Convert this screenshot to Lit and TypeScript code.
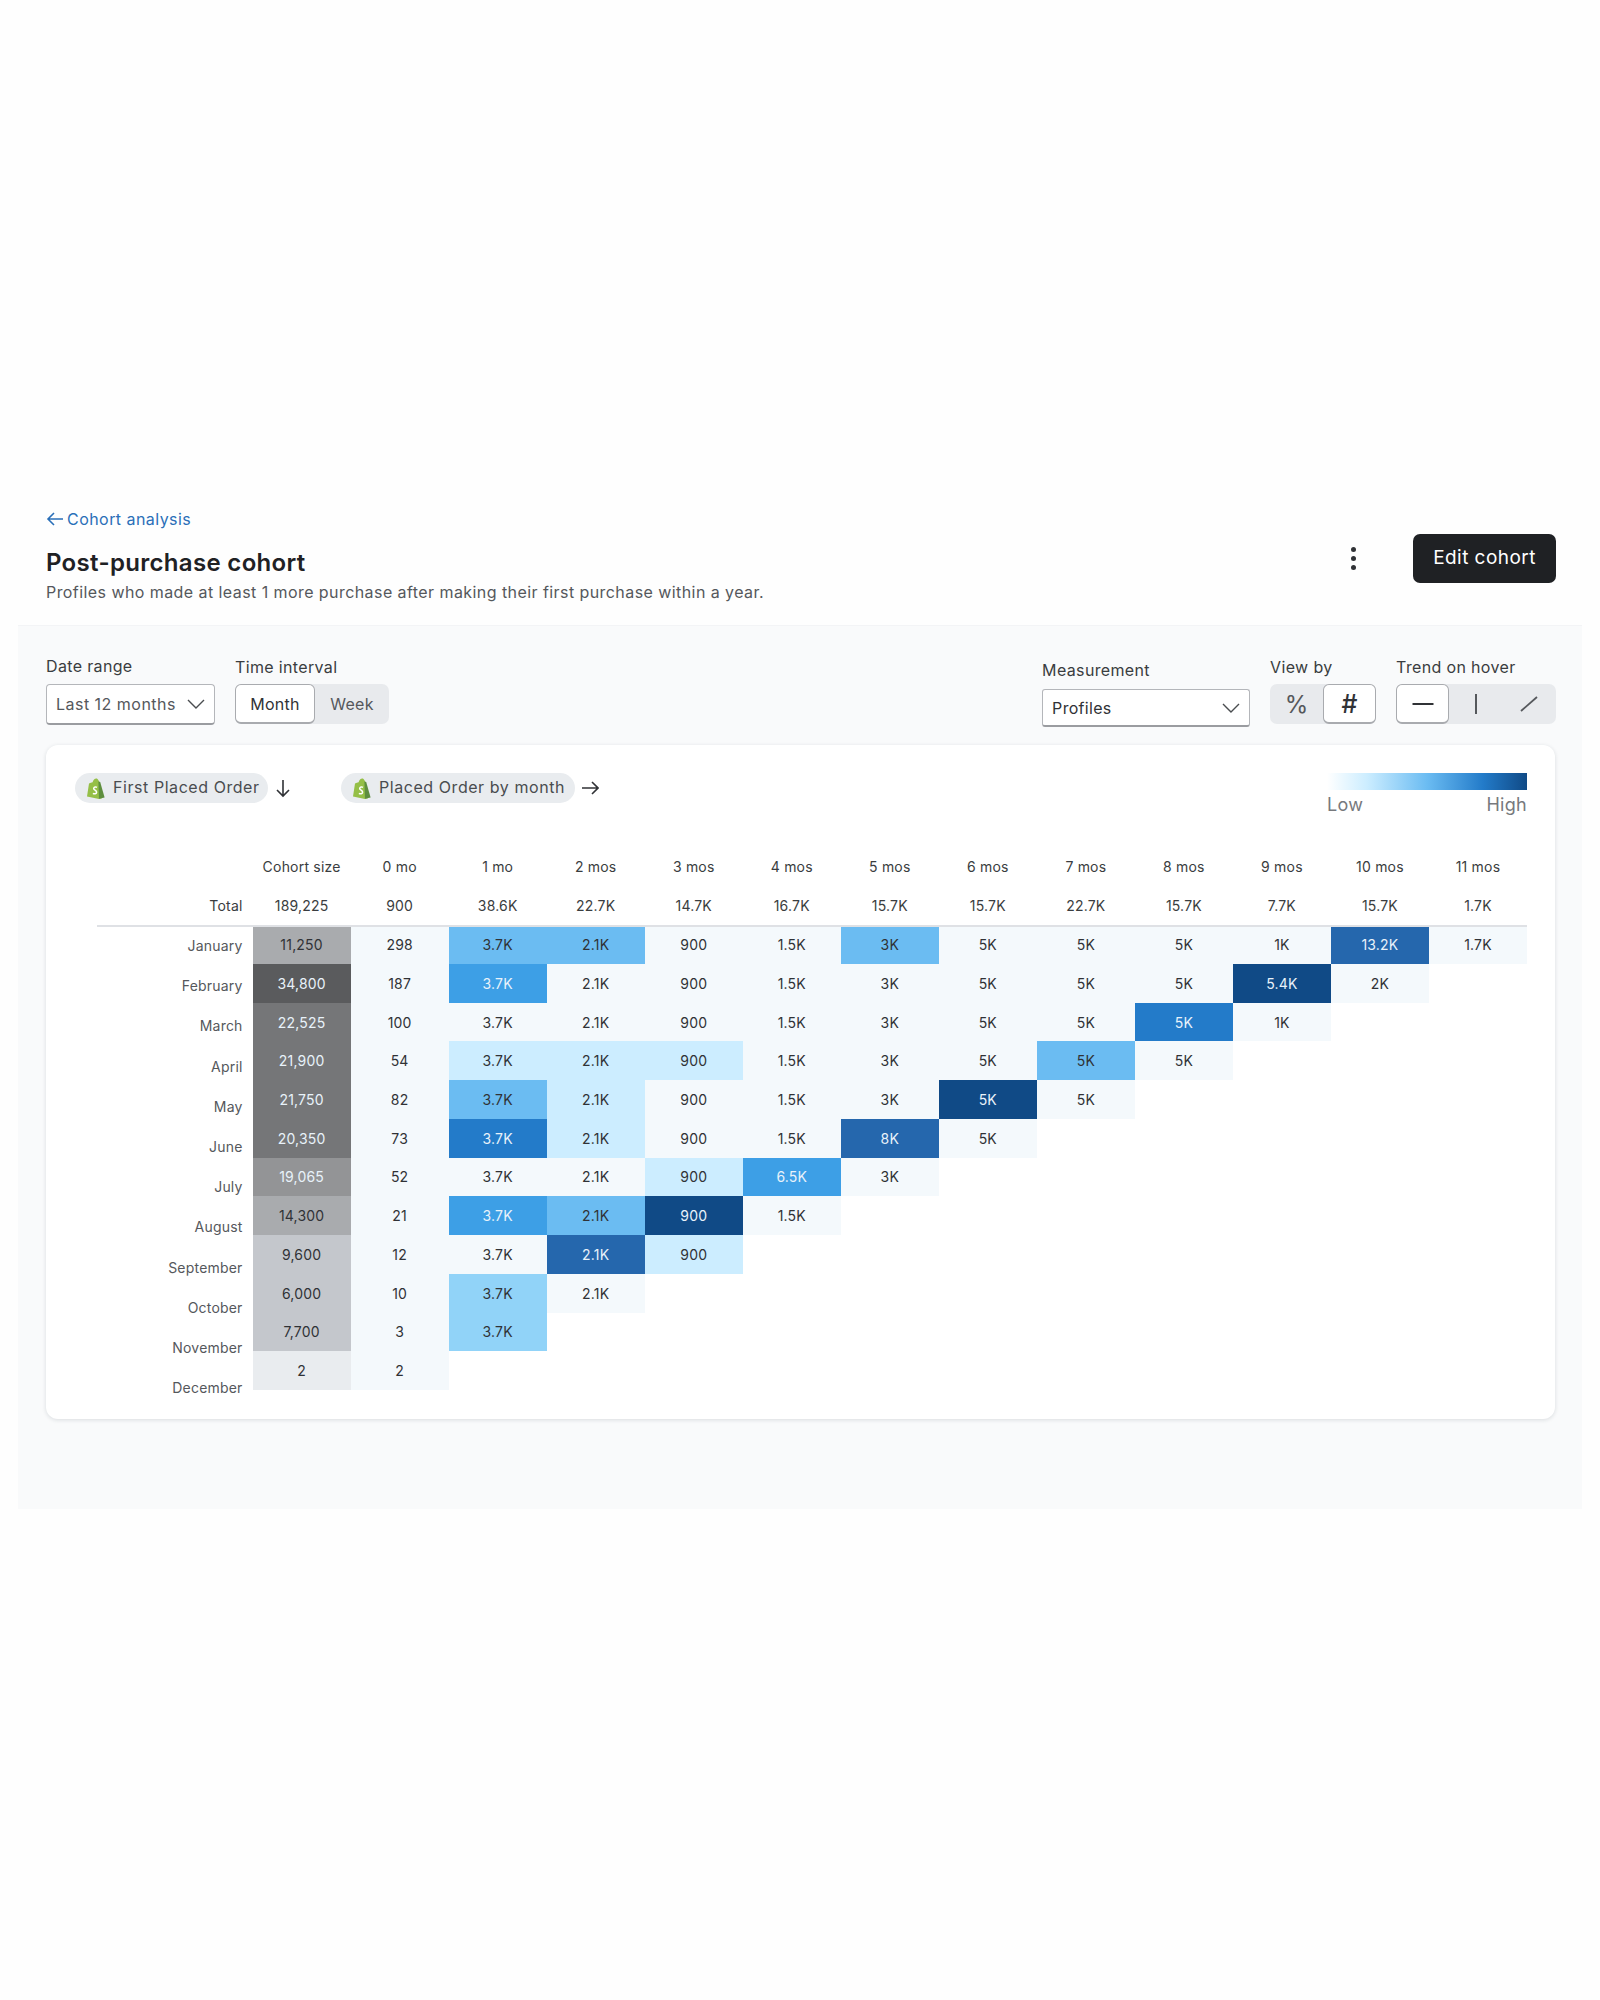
import { LitElement, html, css, svg } from "lit";
import { customElement } from "lit/decorators.js";

const C = { a: "#ccedff", b: "#91d3f8", c: "#6bbcf2", d: "#3d9fe6", e: "#237bc9", f: "#2567ad", g: "#104a86" } as const;
type Cell = [string, keyof typeof C | ""];
const cell = (s: string): Cell => {
  const [v, k] = s.split(":");
  return [v, (k || "") as keyof typeof C | ""];
};
const HEAD = ["Cohort size", "0 mo", "1 mo", "2 mos", "3 mos", "4 mos", "5 mos", "6 mos", "7 mos", "8 mos", "9 mos", "10 mos", "11 mos"];
const TOTAL = ["189,225", "900", "38.6K", "22.7K", "14.7K", "16.7K", "15.7K", "15.7K", "22.7K", "15.7K", "7.7K", "15.7K", "1.7K"];
const MONTHS = ["January", "February", "March", "April", "May", "June", "July", "August", "September", "October", "November", "December"];
const COHORT: [string, string, boolean][] = [
  ["11,250", "#a9abae", false],
  ["34,800", "#5a5b5d", true],
  ["22,525", "#757678", true],
  ["21,900", "#757678", true],
  ["21,750", "#757678", true],
  ["20,350", "#757678", true],
  ["19,065", "#939496", true],
  ["14,300", "#a9abae", false],
  ["9,600", "#c4c7cc", false],
  ["6,000", "#c4c7cc", false],
  ["7,700", "#c4c7cc", false],
  ["2", "#e9ecef", false],
];
const ROWS: string[][] = [
  ["298", "3.7K:c", "2.1K:c", "900", "1.5K", "3K:c", "5K", "5K", "5K", "1K", "13.2K:f", "1.7K"],
  ["187", "3.7K:d", "2.1K", "900", "1.5K", "3K", "5K", "5K", "5K", "5.4K:g", "2K"],
  ["100", "3.7K", "2.1K", "900", "1.5K", "3K", "5K", "5K", "5K:e", "1K"],
  ["54", "3.7K:a", "2.1K:a", "900:a", "1.5K", "3K", "5K", "5K:c", "5K"],
  ["82", "3.7K:c", "2.1K:a", "900", "1.5K", "3K", "5K:g", "5K"],
  ["73", "3.7K:e", "2.1K:a", "900", "1.5K", "8K:f", "5K"],
  ["52", "3.7K", "2.1K", "900:a", "6.5K:d", "3K"],
  ["21", "3.7K:d", "2.1K:c", "900:g", "1.5K"],
  ["12", "3.7K", "2.1K:f", "900:a"],
  ["10", "3.7K:b", "2.1K"],
  ["3", "3.7K:b"],
  ["2"],
];
const LIGHT = new Set(["d", "e", "f", "g"]);

const chevron = html`<svg class="chev" viewBox="0 0 18 10" fill="none" stroke="#4a4d50" stroke-width="1.4"><path d="M1 1 9 9 17 1"/></svg>`;
const shopify = svg`<svg class="bag" viewBox="0 0 19 21"><path d="M1 18.6 3 5.6C4.2 5 5.4 4.6 6.6 4.3 7.2 1.8 8.6.4 10.2.4c1 0 1.7.6 2.1 1.7L13.4 4 15.8 20.4 13 21z" fill="#95bf47"/><path d="M12.4 3.6 14.2 4 18.6 19.4 13 20.8z" fill="#5e8e3e"/><path d="M11 9.4c-.8-.5-3.2-.7-3.3 1.1-.1 1.7 3 1.8 2.9 3.7-.1 1.7-2.2 2-3.7 1.2" fill="none" stroke="#fff" stroke-width="1.5"/></svg>`;

@customElement("app-root")
export class AppRoot extends LitElement {
  static styles = css`
    :host { display: block; width: 1600px; min-height: 2000px; background: #fefefe; font-family: Inter, "Liberation Sans", sans-serif; color: #303236; }
    .page { padding-top: 509px; }
    .header { display: flex; justify-content: space-between; padding: 0 44px 0 46px; height: 116px; }
    .link { display: flex; align-items: center; gap: 3px; height: 20px; color: #2a6fb8; font-size: 16px; letter-spacing: 0.45px; }
    .link svg { width: 18px; height: 16px; }
    h1 { margin: 18px 0 0; font-size: 24px; line-height: 32px; font-weight: 600; color: #1f2124; letter-spacing: 0.32px; }
    .sub { margin-top: 2px; font-size: 16px; line-height: 22px; color: #55585c; letter-spacing: 0.43px; }
    .actions { display: flex; align-items: center; gap: 55px; margin-top: 25px; height: 49px; }
    .dots { width: 10px; display: flex; flex-direction: column; align-items: center; gap: 4px; }
    .dots i { width: 5px; height: 5px; border-radius: 50%; background: #303236; }
    .edit { box-sizing: border-box; width: 143px; height: 49px; padding-bottom: 2px; display: flex; align-items: center; justify-content: center; background: #1f2124; color: #fff; border-radius: 7px; font-size: 19px; letter-spacing: 0.45px; font-weight: 400; }

    .panel { margin: 0 18px; padding: 30px 26px 90px 28px; background: #f9fafb; border-top: 1px solid #f3f4f6; }
    .filters { display: flex; height: 89px; }
    .group { display: flex; flex-direction: column; gap: 7px; padding-top: 1px; }
    .group.date { margin-right: 20px; padding-top: 0; gap: 8px; }
    .group.interval { flex: 1; }
    .group.measure { margin-right: 20px; padding-top: 4px; gap: 9px; }
    .group.view { margin-right: 20px; }
    .label { font-size: 16px; line-height: 20px; color: #3a3d40; letter-spacing: 0.35px; }
    .select { box-sizing: border-box; background: #fff; border: 1px solid #b4b6ba; border-bottom: 2px solid #9a9ca0; border-radius: 4px; display: flex; align-items: center; justify-content: space-between; padding: 0 9px; font-size: 16px; color: #55585c; letter-spacing: 0.48px; }
    .select.date { width: 169px; height: 41px; }
    .select.measure { width: 208px; height: 38px; border-radius: 3px; color: #303236; letter-spacing: 0.3px; }
    .chev { width: 18px; height: 10px; }
    .seg { display: flex; height: 40px; background: #e8eaed; border-radius: 7px; }
    .seg > div { display: flex; align-items: center; justify-content: center; box-sizing: border-box; font-size: 16px; color: #55585c; letter-spacing: 0.3px; }
    .seg > div.on { background: #fff; border: 1px solid #a9abaf; border-bottom-width: 2px; border-radius: 6px; color: #303236; }
    .seg.interval { width: 154px; }
    .seg.interval > div:first-child { width: 80px; }
    .seg.interval > div:last-child { width: 74px; }
    .seg.view > div { width: 53px; font-size: 24px; }
    .seg.view > div.on { font-weight: 500; font-size: 25px; }
    .seg.trend > div { width: 53.3px; }
    .seg svg { width: 24px; height: 24px; }

    .card { box-sizing: border-box; width: 1509px; background: #fff; border-radius: 12px; padding: 28px 28px 11px 29px; box-shadow: 0 1px 4px rgba(30, 40, 60, 0.14); }
    .top { display: flex; justify-content: space-between; height: 74px; }
    .chips { display: flex; height: 30px; }
    .chip { display: flex; align-items: center; height: 30px; box-sizing: border-box; padding: 0 8px 2px 11px; gap: 8px; background: #e9ecef; border-radius: 15px; font-size: 16px; color: #4a4d50; letter-spacing: 0.56px; white-space: nowrap; }
    .chip.one { width: 193px; }
    .chip.two { width: 234px; }
    .bag { width: 19px; height: 21px; flex: none; margin-top: 2px; }
    .arrow { width: 18px; height: 30px; margin-left: 6px; flex: none; }
    .arrow.first { margin-right: 49px; }
    .legend { width: 200px; }
    .ramp { height: 17px; background: linear-gradient(90deg, #ffffff 0%, #ccedff 20%, #6bbcf2 50%, #237bc9 78%, #104a86 100%); }
    .ends { display: flex; justify-content: space-between; font-size: 18px; line-height: 30px; color: #77797d; letter-spacing: 0.3px; }

    .table { padding-left: 22px; }
    .hrow { display: grid; grid-template-columns: 155.6px repeat(13, 98.04px); height: 39px; align-items: center; font-size: 14px; color: #3a3d40; letter-spacing: 0.2px; text-align: center; }
    .hrow.total { position: relative; z-index: 1; border-bottom: 2px solid #dfe1e5; height: 41px; box-sizing: border-box; }
    .hrow .left { text-align: right; padding-right: 10px; }
    .body { display: flex; }
    .months { box-sizing: border-box; width: 155.6px; padding-right: 10px; margin-top: -1px; flex: none; text-align: right; font-size: 14px; line-height: 40.2px; color: #55585c; letter-spacing: 0.2px; }
    .grid { display: grid; grid-template-columns: repeat(13, 98.04px); grid-auto-rows: 38.73px; align-self: flex-start; margin-top: -1.7px; }
    .cell { display: flex; align-items: center; justify-content: center; font-size: 14px; letter-spacing: 0.2px; color: #303236; background: #f4f9fc; }
    .cell.light { color: #e8f2fa; }
    .cell.a { background: #ccedff; }
    .cell.b { background: #91d3f8; }
    .cell.c { background: #6bbcf2; }
    .cell.d { background: #3d9fe6; }
    .cell.e { background: #237bc9; }
    .cell.f { background: #2567ad; }
    .cell.g { background: #104a86; }
  `;

  render() {
    return html`<div class="page">
      <div class="header">
        <div>
          <div class="link">
            <svg viewBox="0 0 18 16" fill="none" stroke="#2a6fb8" stroke-width="1.6"><path d="M17 8H2M8 2 2 8l6 6"/></svg>
            Cohort analysis
          </div>
          <h1>Post-purchase cohort</h1>
          <div class="sub">Profiles who made at least 1 more purchase after making their first purchase within a year.</div>
        </div>
        <div class="actions">
          <div class="dots"><i></i><i></i><i></i></div>
          <div class="edit">Edit cohort</div>
        </div>
      </div>
      <div class="panel">
        <div class="filters">
          <div class="group date">
            <div class="label">Date range</div>
            <div class="select date">Last 12 months ${chevron}</div>
          </div>
          <div class="group interval">
            <div class="label">Time interval</div>
            <div class="seg interval"><div class="on">Month</div><div>Week</div></div>
          </div>
          <div class="group measure">
            <div class="label">Measurement</div>
            <div class="select measure">Profiles ${chevron}</div>
          </div>
          <div class="group view">
            <div class="label">View by</div>
            <div class="seg view"><div>%</div><div class="on">#</div></div>
          </div>
          <div class="group trend">
            <div class="label">Trend on hover</div>
            <div class="seg trend">
              <div class="on"><svg viewBox="0 0 24 24" stroke="#303236" stroke-width="2"><path d="M1.5 12h21"/></svg></div>
              <div><svg viewBox="0 0 24 24" stroke="#55585c" stroke-width="2"><path d="M12 2v20"/></svg></div>
              <div><svg viewBox="0 0 24 24" stroke="#55585c" stroke-width="1.8"><path d="M4 19 20 5"/></svg></div>
            </div>
          </div>
        </div>
        <div class="card">
          <div class="top">
            <div class="chips">
              <div class="chip one">${shopify}First Placed Order</div>
              <svg class="arrow first" viewBox="0 0 18 30" fill="none" stroke="#303236" stroke-width="1.6"><path d="M9 7v16M3 17l6 6 6-6"/></svg>
              <div class="chip two">${shopify}Placed Order by month</div>
              <svg class="arrow" viewBox="0 0 18 30" fill="none" stroke="#303236" stroke-width="1.6"><path d="M1 15h16M11 9l6 6-6 6"/></svg>
            </div>
            <div class="legend">
              <div class="ramp"></div>
              <div class="ends"><span>Low</span><span>High</span></div>
            </div>
          </div>
          <div class="table">
            <div class="hrow"><div></div>${HEAD.map((h) => html`<div>${h}</div>`)}</div>
            <div class="hrow total"><div class="left">Total</div>${TOTAL.map((t) => html`<div>${t}</div>`)}</div>
            <div class="body">
              <div class="months">${MONTHS.map((m) => html`<div>${m}</div>`)}</div>
              <div class="grid">
                ${ROWS.map((row, i) => {
                  const [v, bg, light] = COHORT[i];
                  const cells = row.map(cell);
                  const blanks = 12 - cells.length;
                  return html`<div class="cell ${light ? "light" : ""}" style="background:${bg}">${v}</div>
                    ${cells.map(([t, k]) => html`<div class="cell ${k} ${k && LIGHT.has(k) ? "light" : ""}">${t}</div>`)}
                    ${Array.from({ length: blanks }, () => html`<div></div>`)}`;
                })}
              </div>
            </div>
          </div>
        </div>
      </div>
    </div>`;
  }
}
